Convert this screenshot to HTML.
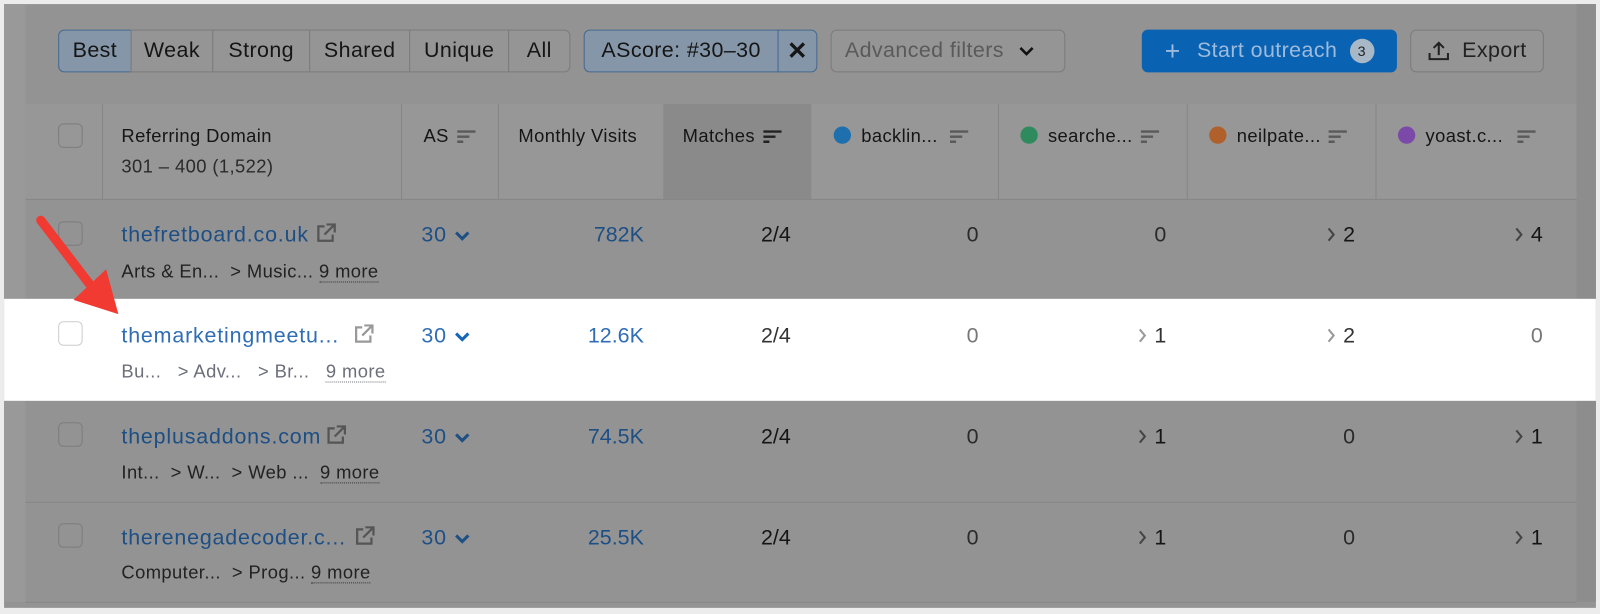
<!DOCTYPE html>
<html><head><meta charset="utf-8"><style>
*{box-sizing:border-box;margin:0;padding:0}
body{width:1600px;height:614px;background:#ececec;font-family:"Liberation Sans",sans-serif;position:relative;overflow:hidden}
#w{position:absolute;left:0;top:0;width:1568px;height:602px;transform:scale(1.0204,1.0199);transform-origin:0 0}
.a{position:absolute}
.main{left:4px;top:4px;width:1560px;height:592px;background:#939393}
.g{color:#222;font-size:18px;letter-spacing:.4px;white-space:nowrap}
.btn{top:29px;height:42px;border:1px solid #7b7b7b;font-size:21px;letter-spacing:.4px;color:#151515;display:flex;align-items:center;justify-content:center;background:#959595}
.line{background:#868686}
.sort{display:inline-block;width:18px;height:14px;vertical-align:middle;margin-left:8px}
.dot{display:inline-block;width:17px;height:17px;border-radius:50%;vertical-align:-2px;margin-right:10px}
.cb{width:24px;height:24px;border:1px solid #7c7c7c;border-radius:5px}
.lnk{color:#1d4f85;font-size:21px;letter-spacing:.8px;white-space:nowrap}
.num{font-size:21px;color:#151515;white-space:nowrap;text-align:right;width:120px}
.more{border-bottom:1px dotted #333}
</style></head><body><div id="w">
<div class="a main"></div>
<div class="a" style="left:4px;top:4px;width:21px;height:586px;background:#999"></div>
<div class="a" style="left:1545px;top:4px;width:19px;height:586px;background:#8d8d8d"></div>

<div class="a btn" style="left:57px;width:72px;border-radius:6px 0 0 6px;background:#8596a8;border-color:#46698f">Best</div>
<div class="a btn" style="left:128px;width:81px">Weak</div>
<div class="a btn" style="left:208px;width:96px">Strong</div>
<div class="a btn" style="left:303px;width:99px">Shared</div>
<div class="a btn" style="left:401px;width:98px">Unique</div>
<div class="a btn" style="left:498px;width:61px;border-radius:0 6px 6px 0">All</div>
<div class="a btn" style="left:572px;width:191px;border-radius:6px 0 0 6px;background:#8596a8;border-color:#46698f">AScore: #30–30</div>
<div class="a btn" style="left:762px;width:39px;border-radius:0 6px 6px 0;background:#8596a8;border-color:#46698f;font-size:24px;font-weight:bold">✕</div>
<div class="a btn" style="left:814px;width:230px;border-radius:6px;color:#5a5a5a;justify-content:flex-start;padding-left:13px">Advanced filters<svg style="margin-left:14px" width="16" height="12" viewBox="0 0 16 12"><path d="M2 3l6 6 6-6" stroke="#111" stroke-width="2.5" fill="none"/></svg></div>
<div class="a btn" style="left:1119px;width:250px;border-radius:6px;background:#0a62b3;border-color:#0a62b3;color:#9dbbdc">
<span style="font-size:26px;margin-right:16px;font-weight:300">+</span>Start outreach<span style="display:inline-flex;width:24px;height:24px;border-radius:50%;background:#a9b8c7;color:#222;font-size:14px;align-items:center;justify-content:center;margin-left:12px">3</span></div>
<div class="a btn" style="left:1382px;width:131px;border-radius:6px;color:#222"><svg width="22" height="22" viewBox="0 0 22 22" style="margin-right:12px"><path d="M11 15V3M6 8l5-5 5 5M2 13v6h18v-6" stroke="#222" stroke-width="2" fill="none"/></svg>Export</div>

<div class="a" style="left:25px;top:102px;width:1520px;height:94px;background:#979797"></div>
<div class="a" style="left:650px;top:102px;width:145px;height:94px;background:#8a8a8a"></div>
<div class="a line" style="left:25px;top:195px;width:1520px;height:1px"></div>
<div class="a line" style="left:100px;top:102px;width:1px;height:93px"></div>
<div class="a line" style="left:393px;top:102px;width:1px;height:93px"></div>
<div class="a line" style="left:488px;top:102px;width:1px;height:93px"></div>
<div class="a line" style="left:978px;top:102px;width:1px;height:93px"></div>
<div class="a line" style="left:1163px;top:102px;width:1px;height:93px"></div>
<div class="a line" style="left:1348px;top:102px;width:1px;height:93px"></div>
<div class="a cb" style="left:57px;top:121px"></div>
<div class="a g" style="left:119px;top:123px;color:#151515">Referring Domain</div>
<div class="a g" style="left:119px;top:153px;color:#2a2a2a">301 – 400 (1,522)</div>
<svg width="0" height="0" style="position:absolute"><defs><g id="s"><path d="M0 2h18M0 7h12M0 12h6" stroke="#5a5a5a" stroke-width="2.4"/></g></defs></svg>
<div class="a g" style="left:415px;top:123px;color:#151515">AS<svg class="sort"><use href="#s"/></svg></div>
<div class="a g" style="left:508px;top:123px;color:#151515">Monthly Visits</div>
<div class="a g" style="left:669px;top:123px;color:#151515">Matches<svg class="sort"><path d="M0 2h18M0 7h12M0 12h6" stroke="#222" stroke-width="2.4"/></svg></div>
<div class="a g" style="left:817px;top:123px;color:#151515"><span class="dot" style="background:#1d6fad"></span>backlin...<svg class="sort" style="margin-left:12px"><use href="#s"/></svg></div>
<div class="a g" style="left:1000px;top:123px;color:#151515"><span class="dot" style="background:#2f8a5e"></span>searche...<svg class="sort" style="margin-left:8px"><use href="#s"/></svg></div>
<div class="a g" style="left:1185px;top:123px;color:#151515"><span class="dot" style="background:#b0602a"></span>neilpate...<svg class="sort" style="margin-left:8px"><use href="#s"/></svg></div>
<div class="a g" style="left:1370px;top:123px;color:#151515"><span class="dot" style="background:#7b4aa8"></span>yoast.c...<svg class="sort" style="margin-left:14px"><use href="#s"/></svg></div>

<div class="a" style="left:4px;top:293px;width:1560px;height:100px;background:#fff"></div>
<div class="a line" style="left:25px;top:492px;width:1520px;height:1px"></div>
<div class="a line" style="left:25px;top:590px;width:1520px;height:1px"></div>

<svg width="0" height="0" style="position:absolute"><defs>
<g id="ext"><path d="M9 3H3v14h14v-6M11 1h8v8M19 1L9 11" stroke="currentColor" stroke-width="2.2" fill="none"/></g>
<g id="chev"><path d="M2 3l6 6 6-6" stroke="currentColor" stroke-width="3" fill="none"/></g>
<g id="gt"><path d="M2 1l5 6-5 6" stroke="currentColor" stroke-width="2" fill="none"/></g>
</defs></svg>

<!-- row 1 -->
<div class="a cb" style="left:57px;top:217px"></div>
<div class="a lnk" style="left:119px;top:219px">thefretboard.co.uk<svg width="22" height="20" style="color:#555;vertical-align:-2px;margin-left:6px"><use href="#ext"/></svg></div>
<div class="a g" style="left:119px;top:256px">Arts &amp; En...&nbsp; &gt; Music...&nbsp;<span class="more">9 more</span></div>
<div class="a lnk" style="left:413px;top:219px">30 <svg width="16" height="12" style="color:#1d4f85"><use href="#chev"/></svg></div>
<div class="a num" style="left:511px;top:219px;color:#1d4f85">782K</div>
<div class="a num" style="left:655px;top:219px">2/4</div>
<div class="a num" style="left:839px;top:219px;color:#2a2a2a">0</div>
<div class="a num" style="left:1023px;top:219px;color:#2a2a2a">0</div>
<div class="a num" style="left:1208px;top:219px"><svg width="10" height="14" style="color:#444"><use href="#gt"/></svg> 2</div>
<div class="a num" style="left:1392px;top:219px"><svg width="10" height="14" style="color:#444"><use href="#gt"/></svg> 4</div>

<!-- row 2 -->
<div class="a cb" style="left:57px;top:315px;border-color:#ccc"></div>
<div class="a lnk" style="left:119px;top:318px;color:#2f6db5">themarketingmeetu...<svg width="22" height="20" style="color:#999;vertical-align:-2px;margin-left:14px"><use href="#ext"/></svg></div>
<div class="a g" style="left:119px;top:354px;color:#6c6e79">Bu...&nbsp;&nbsp; &gt; Adv...&nbsp;&nbsp; &gt; Br...&nbsp;&nbsp; <span class="more" style="border-color:#6c6e79">9 more</span></div>
<div class="a lnk" style="left:413px;top:318px;color:#2f6db5">30 <svg width="16" height="12" style="color:#1565b8"><use href="#chev"/></svg></div>
<div class="a num" style="left:511px;top:318px;color:#2f6db5">12.6K</div>
<div class="a num" style="left:655px;top:318px;color:#333">2/4</div>
<div class="a num" style="left:839px;top:318px;color:#777">0</div>
<div class="a num" style="left:1023px;top:318px;color:#333"><svg width="10" height="14" style="color:#999"><use href="#gt"/></svg> 1</div>
<div class="a num" style="left:1208px;top:318px;color:#333"><svg width="10" height="14" style="color:#999"><use href="#gt"/></svg> 2</div>
<div class="a num" style="left:1392px;top:318px;color:#777">0</div>

<!-- row 3 -->
<div class="a cb" style="left:57px;top:414px"></div>
<div class="a lnk" style="left:119px;top:417px">theplusaddons.com<svg width="22" height="20" style="color:#555;vertical-align:-2px;margin-left:4px"><use href="#ext"/></svg></div>
<div class="a g" style="left:119px;top:453px">Int...&nbsp; &gt; W...&nbsp; &gt; Web ...&nbsp;&nbsp;<span class="more">9 more</span></div>
<div class="a lnk" style="left:413px;top:417px">30 <svg width="16" height="12" style="color:#1d4f85"><use href="#chev"/></svg></div>
<div class="a num" style="left:511px;top:417px;color:#1d4f85">74.5K</div>
<div class="a num" style="left:655px;top:417px">2/4</div>
<div class="a num" style="left:839px;top:417px;color:#2a2a2a">0</div>
<div class="a num" style="left:1023px;top:417px"><svg width="10" height="14" style="color:#444"><use href="#gt"/></svg> 1</div>
<div class="a num" style="left:1208px;top:417px;color:#2a2a2a">0</div>
<div class="a num" style="left:1392px;top:417px"><svg width="10" height="14" style="color:#444"><use href="#gt"/></svg> 1</div>

<!-- row 4 -->
<div class="a cb" style="left:57px;top:513px"></div>
<div class="a lnk" style="left:119px;top:516px">therenegadecoder.c...<svg width="22" height="20" style="color:#555;vertical-align:-2px;margin-left:8px"><use href="#ext"/></svg></div>
<div class="a g" style="left:119px;top:551px">Computer...&nbsp; &gt; Prog...&nbsp;<span class="more">9 more</span></div>
<div class="a lnk" style="left:413px;top:516px">30 <svg width="16" height="12" style="color:#1d4f85"><use href="#chev"/></svg></div>
<div class="a num" style="left:511px;top:516px;color:#1d4f85">25.5K</div>
<div class="a num" style="left:655px;top:516px">2/4</div>
<div class="a num" style="left:839px;top:516px;color:#2a2a2a">0</div>
<div class="a num" style="left:1023px;top:516px"><svg width="10" height="14" style="color:#444"><use href="#gt"/></svg> 1</div>
<div class="a num" style="left:1208px;top:516px;color:#2a2a2a">0</div>
<div class="a num" style="left:1392px;top:516px"><svg width="10" height="14" style="color:#444"><use href="#gt"/></svg> 1</div>

<svg class="a" style="left:0;top:200px" width="140" height="120" viewBox="0 0 140 120">
<path d="M40 16 L92 84" stroke="#f03a32" stroke-width="9" stroke-linecap="round"/>
<path d="M72 94 L116 108 L104 64 Z" fill="#f03a32"/>
</svg>
</div></body></html>
